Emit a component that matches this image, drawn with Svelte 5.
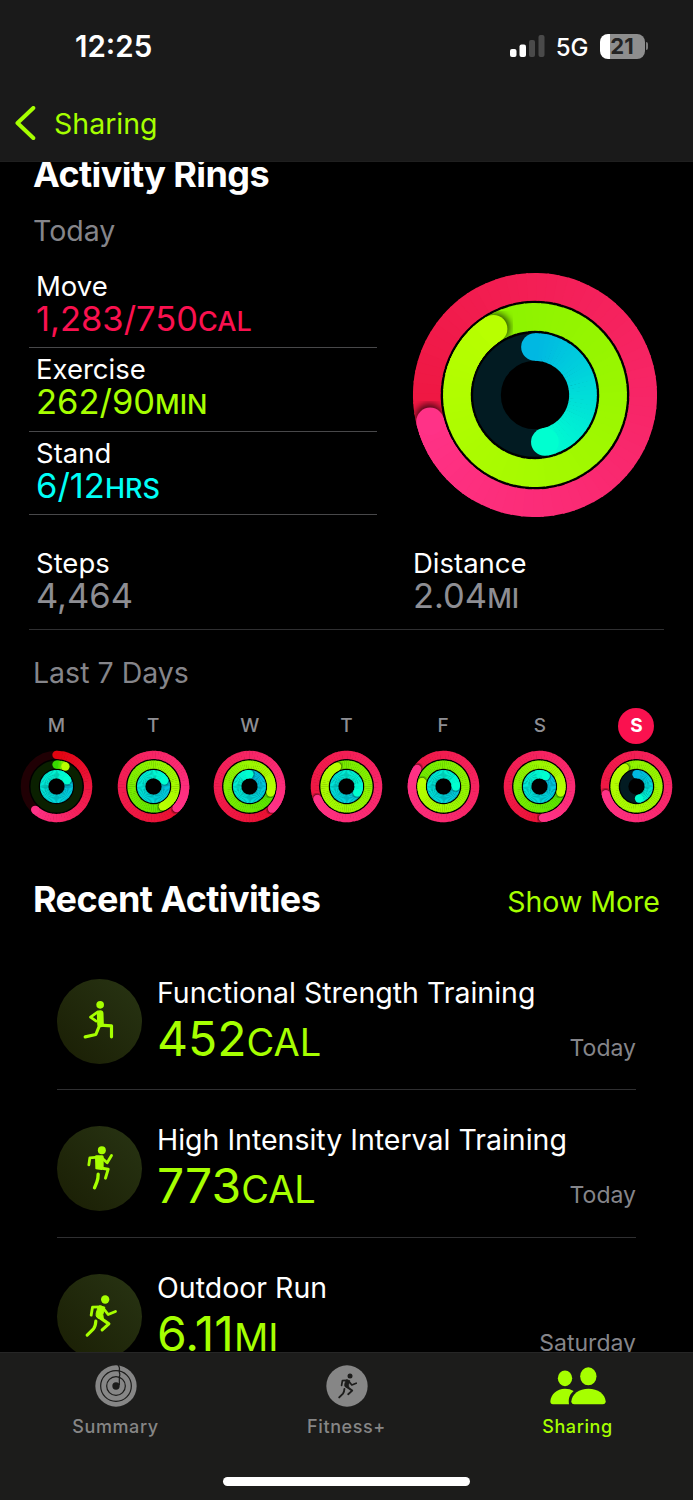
<script lang="ts">
	type Rgb = [number, number, number];
	type Day = { id: number; letter: string; laps: number[]; today?: boolean };

	const COLORS: { from: Rgb; to: Rgb; track: string }[] = [
		{ from: [226, 4, 16], to: [255, 50, 135], track: '#200004' },
		{ from: [56, 218, 0], to: [184, 255, 0], track: '#0a2000' },
		{ from: [0, 184, 226], to: [0, 255, 208], track: '#021b22' }
	];

	const GOALS = [
		{ id: 'move', label: 'Move', value: '1,283/750', unit: 'CAL' },
		{ id: 'exercise', label: 'Exercise', value: '262/90', unit: 'MIN' },
		{ id: 'stand', label: 'Stand', value: '6/12', unit: 'HRS' }
	];

	const TODAY = [1.7107, 2.911, 0.467];

	const DAYS: Day[] = [
		{ id: 0, letter: 'M', laps: [0.618, 0.067, 1.165] },
		{ id: 1, letter: 'T', laps: [1.37, 1.43, 1.17] },
		{ id: 2, letter: 'W', laps: [1.374, 1.295, 1.0] },
		{ id: 3, letter: 'T', laps: [1.686, 1.93, 1.333] },
		{ id: 4, letter: 'F', laps: [1.844, 1.783, 1.25] },
		{ id: 5, letter: 'S', laps: [1.483, 1.295, 1.086] },
		{ id: 6, letter: 'S', laps: TODAY, today: true }
	];

	const ACTIVITIES = [
		{ icon: 'lunge', name: 'Functional Strength Training', value: '452', unit: 'CAL', when: 'Today' },
		{ icon: 'hiit', name: 'High Intensity Interval Training', value: '773', unit: 'CAL', when: 'Today' },
		{ icon: 'run', name: 'Outdoor Run', value: '6.11', unit: 'MI', when: 'Saturday' }
	];

	const STEP = 5;

	function point(r: number, deg: number) {
		const a = (deg * Math.PI) / 180;
		return { x: r * Math.sin(a), y: -r * Math.cos(a) };
	}

	function mix(a: Rgb, b: Rgb, t: number) {
		return `rgb(${a.map((v, i) => Math.round(v + (b[i] - v) * t)).join(',')})`;
	}

	// Only the last full turn is visible, so older laps are skipped
	function segments(r: number, laps: number, from: Rgb, to: Rgb) {
		const end = laps * 360;
		const out: { d: string; color: string }[] = [];
		for (let a = Math.max(0, end - 360); a < end; a += STEP) {
			const p = point(r, a);
			const q = point(r, Math.min(end, a + STEP + 0.8));
			out.push({
				d: `M${p.x.toFixed(2)} ${p.y.toFixed(2)}A${r} ${r} 0 0 1 ${q.x.toFixed(2)} ${q.y.toFixed(2)}`,
				color: mix(from, to, a / end)
			});
		}
		return out;
	}
</script>

{#snippet rings(id: string, laps: number[], radii: number[], width: number, size: number)}
	<svg class="rings" width={size} height={size} viewBox="{-size / 2} {-size / 2} {size} {size}">
		<defs>
			<filter id="blur-{id}" x="-50%" y="-50%" width="200%" height="200%">
				<feGaussianBlur stdDeviation={width * 0.13} />
			</filter>
		</defs>
		{#each COLORS as c, i (i)}
			{@const r = radii[i]}
			{@const head = point(r, laps[i] * 360)}
			{@const shade = point(r, laps[i] * 360 + 2)}
			<mask id="ring-{id}-{i}">
				<circle {r} fill="none" stroke="#fff" stroke-width={width} />
			</mask>
			<circle {r} fill="none" stroke={c.track} stroke-width={width} />
			{#if laps[i] < 1}
				<circle cx="0" cy={-r} r={width / 2} fill={mix(c.from, c.to, 0)} />
			{/if}
			{#each segments(r, laps[i], c.from, c.to) as s}
				<path d={s.d} fill="none" stroke={s.color} stroke-width={width} />
			{/each}
			{#if laps[i] >= 1}
				<g mask="url(#ring-{id}-{i})">
					<path
						d="M{shade.x} {shade.y}m{-width / 2} 0a{width / 2} {width / 2} 0 1 0 {width} 0a{width / 2} {width / 2} 0 1 0 {-width} 0"
						fill="#000"
						fill-opacity="0.7"
						filter="url(#blur-{id})"
					/>
				</g>
				<!-- repaint the tail over the half of the shadow that falls behind the head -->
				{#each segments(r, laps[i], c.from, c.to).slice(-9) as s}
					<path d={s.d} fill="none" stroke={s.color} stroke-width={width} />
				{/each}
			{/if}
			<circle cx={head.x} cy={head.y} r={width / 2} fill={mix(c.from, c.to, 1)} />
		{/each}
	</svg>
{/snippet}

{#snippet runner()}
	<circle cx="195" cy="135" r="12.5" fill="currentColor" stroke="none" />
	<path d="M179 154L194 158L188 180L190 196L172 190Q166 186 168 176L173 160Z" fill="currentColor" stroke-width="3" />
	<path d="M182 157L157 158L153 182" stroke-width="8.5" />
	<path d="M190 162L204 180L226 171" stroke-width="8.5" />
	<path d="M176 187L206 208L186 226" stroke-width="9.5" />
	<path d="M167 200Q166 216 160 223L141 242" stroke-width="9.5" />
{/snippet}

<div class="phone">
	<header class="top">
		<div class="status">
			<span class="clock">12:25</span>
			<div class="signals">
				<svg width="36" height="22" viewBox="0 0 36 22">
					<rect x="0" y="14" width="6.5" height="8" rx="2" fill="#fff" />
					<rect x="9.5" y="9.5" width="6.5" height="12.5" rx="2" fill="#fff" />
					<rect x="19" y="5" width="6" height="17" rx="2" fill="#4a4a4a" />
					<rect x="28.5" y="0" width="6" height="22" rx="2" fill="#4a4a4a" />
				</svg>
				<span class="network">5G</span>
				<div class="battery"><span>21</span></div>
				<i class="nub"></i>
			</div>
		</div>
		<div class="back">
			<svg width="22" height="34" viewBox="0 0 22 34">
				<path d="M18.3 2L2.5 17L18.3 32" />
			</svg>
			<span>Sharing</span>
		</div>
	</header>

	<main>
		<h1 class="title clipped">Activity Rings</h1>
		<p class="sub today">Today</p>
		<section class="summary">
			<div class="goals">
				{#each GOALS as g (g.id)}
					<div class="goal">
						<div class="label {g.id}-label">{g.label}</div>
						<div class="value {g.id}">{g.value}<small>{g.unit}</small></div>
					</div>
				{/each}
			</div>
			{@render rings('big', TODAY, [108.2, 78.1, 48], 27.7, 246)}
		</section>
		<section class="totals">
			<div>
				<div class="label">Steps</div>
				<div class="value">4,464</div>
			</div>
			<div>
				<div class="label">Distance</div>
				<div class="value">2.04<small>MI</small></div>
			</div>
		</section>

		<p class="sub week-title">Last 7 Days</p>
		<section class="week">
			{#each DAYS as d (d.id)}
				<div class="day">
					<span class="letter" class:current={d.today}>{d.letter}</span>
					{@render rings(`d${d.id}`, d.laps, [31.6, 21.9, 12.3], 8.3, 73)}
				</div>
			{/each}
		</section>

		<div class="recent">
			<h2 class="title">Recent Activities</h2>
			<span class="more">Show More</span>
		</div>
		<section class="activities">
			{#each ACTIVITIES as a (a.name)}
				<article class="activity">
					<div class="badge">
						{#if a.icon === 'lunge'}
							<svg class="figure" viewBox="50.5 73.5 255 255">
								<circle cx="180" cy="151" r="11.5" fill="currentColor" stroke="none" />
								<path d="M180 177L181 208" stroke-width="20" />
								<path d="M173 172L151 188L168 200" stroke-width="8" />
								<path d="M180 212L214 214L214 247" stroke-width="9.5" />
								<path d="M178 213L167 240L135 247" stroke-width="9.5" />
							</svg>
						{:else if a.icon === 'hiit'}
							<svg class="figure" viewBox="50.5 66.5 255 255">
								<circle cx="185" cy="139" r="12" fill="currentColor" stroke="none" />
								<path d="M168 159L186 159L186 193L204 196L196 223" stroke-width="9" />
								<path d="M167 159L186 159L184 196L168 194Z" fill="currentColor" stroke-width="5" />
								<path d="M174 160L149 162L146 183" stroke-width="8.5" />
								<path d="M186 163L201 177L214 155" stroke-width="8.5" />
								<path d="M174 211Q174 226 170 235L163 252" stroke-width="10" />
							</svg>
						{:else}
							<svg class="figure" viewBox="50.5 58.5 255 255">{@render runner()}</svg>
						{/if}
					</div>
					<div class="info">
						<div class="name">{a.name}</div>
						<div class="line">
							<span class="amount">{a.value}<small>{a.unit}</small></span>
							<span class="when">{a.when}</span>
						</div>
					</div>
				</article>
			{/each}
		</section>
	</main>

	<nav class="tabs">
		<div class="tab">
			<svg width="42" height="42" viewBox="133 59 126 126">
				<circle cx="196" cy="122" r="62" fill="#868686" />
				<g fill="none" stroke="#1c1c1b" stroke-width="3.6">
					<circle cx="196" cy="122" r="46" />
					<circle cx="196" cy="122" r="28" />
					<path d="M202 59Q208 66 206 73V82Q209 87 206 94V120" />
				</g>
				<circle cx="196" cy="122" r="11" fill="#1c1c1b" />
			</svg>
			<span>Summary</span>
		</div>
		<div class="tab">
			<svg width="42" height="42" viewBox="824 59 126 126">
				<circle cx="887" cy="122" r="62" fill="#868686" />
				<g class="figure dark" transform="translate(779 11) scale(0.6)">{@render runner()}</g>
			</svg>
			<span>Fitness+</span>
		</div>
		<div class="tab active">
			<svg width="56" height="42" viewBox="148 59 168 126" fill="currentColor">
				<ellipse cx="193" cy="99" rx="21.5" ry="23.5" />
				<ellipse cx="263" cy="93" rx="24.5" ry="27" />
				<path d="M157 177Q149 177 149 168C151 147 168 130 193 130Q208 130 219 137C208 146 202 158 205 177Z" />
				<path d="M221 177Q212 177 212 168C214 146 235 130 263.500 130S313 146 315 168Q315 177 306 177Z" />
			</svg>
			<span>Sharing</span>
		</div>
		<div class="home"></div>
	</nav>
</div>

<style>
	:global(body) {
		background: #000;
	}
	.phone {
		width: 693px;
		height: 1500px;
		display: flex;
		flex-direction: column;
		background: #000;
		color: #fff;
		font-family: Inter, 'Liberation Sans', sans-serif;
		overflow: hidden;
	}
	h1,
	h2,
	p {
		margin: 0;
	}
	svg {
		display: block;
		flex-shrink: 0;
	}

	.top {
		flex: 0 0 162px;
		box-sizing: border-box;
		background: #1a1a1a;
		border-bottom: 1px solid #1f1f1f;
	}
	.status {
		height: 92px;
		box-sizing: border-box;
		padding: 0 47px 0 75px;
		display: flex;
		align-items: center;
		justify-content: space-between;
	}
	.clock {
		font-size: 29.5px;
		font-weight: 600;
	}
	.signals {
		display: flex;
		align-items: center;
	}
	.network {
		margin: 2px 11px 0 10px;
		font-size: 24px;
		font-weight: 500;
	}
	.battery {
		width: 45px;
		height: 25px;
		border-radius: 8px;
		background: linear-gradient(90deg, #fff 0 9.5px, #8e8e8e 9.5px);
		color: #242424;
		font-size: 22px;
		font-weight: 700;
		line-height: 25px;
		text-align: center;
	}
	.nub {
		width: 2.5px;
		height: 8px;
		margin-left: 1px;
		border-radius: 0 3px 3px 0;
		background: #7d7d7d;
		margin-right: -2px;
	}
	.back {
		display: flex;
		align-items: center;
		gap: 17px;
		height: 62px;
		padding-left: 15px;
		color: #a6ff00;
		font-size: 28.5px;
	}
	.back path {
		fill: none;
		stroke: #a6ff00;
		stroke-width: 4;
		stroke-linecap: round;
		stroke-linejoin: round;
	}

	main {
		flex: 1;
		min-height: 0;
		overflow: hidden;
	}
	.title {
		font-size: 36px;
		line-height: 44px;
		font-weight: 700;
		letter-spacing: -0.6px;
	}
	/* scrolled partly under the header */
	.clipped {
		margin: -10px 0 0 33px;
	}
	.sub {
		margin-left: 33px;
		color: #85858a;
		font-size: 28.5px;
		line-height: 36px;
	}
	.today {
		margin-top: 17px;
	}
	.summary {
		display: flex;
		justify-content: space-between;
		padding: 15.5px 35px 0 29px;
		height: 251px;
	}
	.goals {
		width: 348px;
	}
	.summary > :global(.rings) {
		margin-top: 7px;
	}
	.goal {
		box-sizing: border-box;
		height: 83.5px;
		padding: 6px 0 0 7px;
		border-bottom: 1px solid #48484a;
	}
	.label {
		font-size: 27.5px;
		line-height: 31px;
	}
	.value {
		font-size: 34.5px;
		line-height: 34px;
		color: #8e8e93;
	}
	.value small {
		font-size: 27px;
		font-weight: 500;
	}
	.move {
		color: #fa114f;
	}
	.exercise {
		color: #a6ff00;
	}
	.stand {
		color: #00fff6;
	}
	.totals {
		display: grid;
		grid-template-columns: 377px 1fr;
		margin: 0 29px;
		padding: 32px 0 13px 7px;
		border-bottom: 1px solid #2f2f31;
	}

	.week-title {
		margin-top: 25px;
	}
	.week {
		display: flex;
		justify-content: space-between;
		margin: 17px 20px 0 20px;
	}
	.day {
		display: flex;
		flex-direction: column;
		align-items: center;
		gap: 6px;
	}
	.letter {
		width: 36px;
		height: 36px;
		border-radius: 50%;
		color: #8e8e93;
		font-size: 19px;
		font-weight: 500;
		line-height: 36px;
		text-align: center;
	}
	.letter.current {
		background: #fa114f;
		color: #fff;
		font-weight: 700;
	}

	.recent {
		display: flex;
		justify-content: space-between;
		align-items: baseline;
		margin: 54px 33px 0 33px;
	}
	.more {
		color: #a6ff00;
		font-size: 28.5px;
	}
	.activities {
		margin: 22px 57px 0 57px;
	}
	.activity {
		display: flex;
		gap: 15px;
		box-sizing: border-box;
		height: 147.5px;
		padding-top: 26px;
		border-bottom: 1px solid #2f2f31;
	}
	.badge {
		width: 85px;
		height: 85px;
		margin-top: 10px;
		flex-shrink: 0;
		border-radius: 50%;
		background: linear-gradient(45deg, #1a1e04, #283413);
	}
	.figure {
		color: #a6ff00;
		fill: none;
		stroke: currentColor;
		stroke-linecap: round;
		stroke-linejoin: round;
	}
	.figure.dark {
		color: #1c1c1b;
	}
	.info {
		flex: 1;
	}
	.name {
		margin-top: 6px;
		font-size: 28.5px;
		line-height: 36px;
		white-space: nowrap;
	}
	.line {
		display: flex;
		justify-content: space-between;
		align-items: baseline;
		line-height: 56px;
	}
	.amount {
		color: #a6ff00;
		font-size: 48px;
	}
	.amount small {
		font-size: 38px;
	}
	.when {
		color: #85858a;
		font-size: 23px;
	}

	.tabs {
		flex: 0 0 148px;
		box-sizing: border-box;
		display: grid;
		grid-template-columns: repeat(3, 1fr);
		grid-template-rows: 129px 10px;
		background: #1c1c1b;
		border-top: 1px solid #262626;
	}
	.tab {
		display: flex;
		flex-direction: column;
		align-items: center;
		padding-top: 12px;
		color: #868686;
		font-size: 18px;
		font-weight: 500;
		letter-spacing: 0.6px;
	}
	.tab span {
		margin-top: 9px;
		line-height: 22px;
	}
	.tab.active {
		color: #a6ff00;
	}
	.home {
		grid-column: 1 / -1;
		justify-self: center;
		width: 247px;
		height: 9px;
		margin-top: -5px;
		border-radius: 5px;
		background: #fff;
	}
</style>
